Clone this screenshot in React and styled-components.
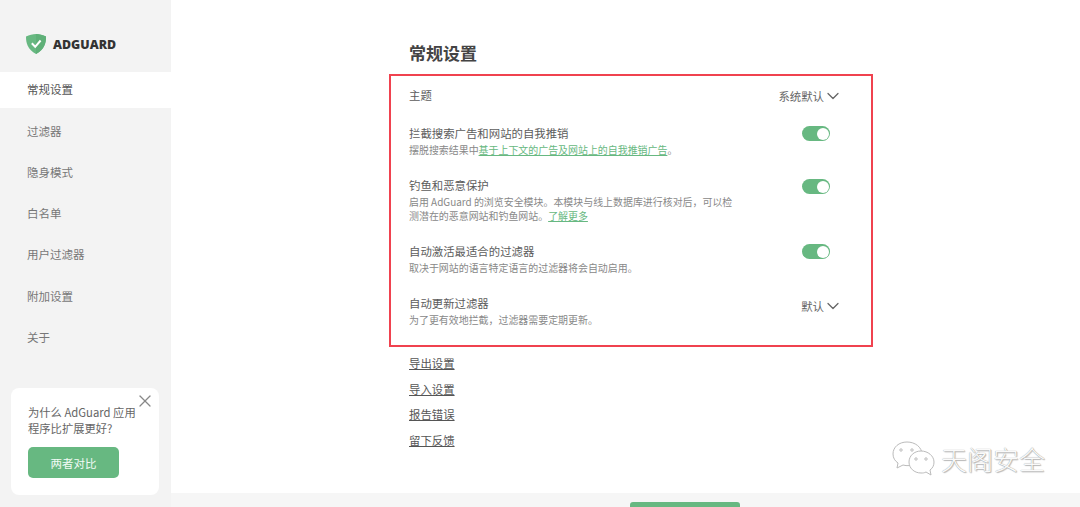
import styled, { createGlobalStyle } from 'styled-components';
import { ChevronDown, X } from 'lucide-react';

const GlobalStyle = createGlobalStyle`
  html, body {
    margin: 0;
    padding: 0;
    background: #fff;
  }

  body {
    font-family: "Noto Sans CJK SC", "Noto Sans", sans-serif;
    color: #555;
  }
`;

const Page = styled.div`
  position: relative;
  display: flex;
  width: 1080px;
  height: 507px;
  overflow: hidden;
`;

const Sidebar = styled.aside`
  display: flex;
  flex-direction: column;
  flex: 0 0 171px;
  background: #f3f3f3;
`;

const Logo = styled.div`
  display: flex;
  align-items: center;
  gap: 7px;
  height: 72px;
  padding: 16px 0 0 26px;
  box-sizing: border-box;
`;

const LogoText = styled.span`
  font-family: "Open Sans", "Liberation Sans", sans-serif;
  font-size: 12.4px;
  font-weight: 800;
  color: #333;
`;

const Nav = styled.nav`
  display: flex;
  flex-direction: column;
  gap: 5.3px;
`;

const NavItem = styled.div`
  display: flex;
  align-items: center;
  box-sizing: border-box;
  height: 36px;
  padding: 0 0 1.5px 27px;
  font-size: 11.5px;
  color: ${(p) => (p.$active ? '#555' : '#777')};
  background: ${(p) => (p.$active ? '#fff' : 'transparent')};
`;

const Promo = styled.div`
  position: relative;
  margin: auto 12px 12px 11px;
  padding: 16px 17px 17px;
  background: #fff;
  border-radius: 8px;
`;

const PromoText = styled.p`
  margin: 0 0 11px;
  font-size: 11.3px;
  line-height: 16px;
  color: #666;
`;

const PromoButton = styled.div`
  display: flex;
  align-items: center;
  justify-content: center;
  width: 91px;
  height: 31px;
  border-radius: 5px;
  background: #67b881;
  color: #f2fbf5;
  font-size: 11.5px;
`;

const Close = styled.span`
  position: absolute;
  top: 3px;
  right: 4px;
  display: flex;
  color: #888;
`;

const Main = styled.main`
  display: flex;
  flex-direction: column;
  flex: 1;
  min-width: 0;
`;

const Content = styled.div`
  flex: 1;
  padding: 41px 0 0 218px;
`;

const Title = styled.h1`
  margin: 0 0 9px 20px;
  font-size: 17px;
  line-height: 24px;
  font-weight: 700;
  color: #444;
`;

const SettingsBox = styled.section`
  display: flex;
  flex-direction: column;
  gap: 20px;
  box-sizing: border-box;
  width: 484px;
  height: 273px;
  padding: 11px 41px 0 18px;
  border: 2px solid #f0424f;
`;

const Row = styled.div`
  display: flex;
  justify-content: space-between;
  align-items: flex-start;
`;

const RowText = styled.div`
  width: 330px;
`;

const RowTitle = styled.div`
  font-size: 11.4px;
  line-height: 16px;
  color: #5c5c5c;
`;

const RowDesc = styled.div`
  margin-top: 2px;
  font-size: 9.95px;
  line-height: 14px;
  color: #888;
`;

const GreenLink = styled.span`
  color: #67b881;
  text-decoration: underline;
`;

const Select = styled.div`
  display: flex;
  align-items: center;
  margin: ${(p) => p.$top || 0}px -12px 0 0;
  font-size: 11.4px;
  line-height: 18px;
  color: #666;

  svg {
    margin: -1px;
    color: #666;
  }
`;

const Toggle = styled.div`
  display: flex;
  justify-content: flex-end;
  align-items: center;
  box-sizing: border-box;
  width: 28px;
  height: 15px;
  margin-top: ${(p) => p.$top || 1}px;
  padding-right: 1.5px;
  border-radius: 8px;
  background: #67b881;

  &::after {
    content: '';
    width: 12px;
    height: 12px;
    border-radius: 50%;
    background: #fff;
  }
`;

const Links = styled.div`
  display: flex;
  flex-direction: column;
  align-items: flex-start;
  gap: 7.6px;
  margin: 7px 0 0 20px;
`;

const PlainLink = styled.span`
  font-size: 11.4px;
  line-height: 18px;
  color: #555;
  text-decoration: underline;
`;

const Footer = styled.footer`
  flex: 0 0 14px;
  padding-left: 459px;
  overflow: hidden;
  background: #f6f6f6;
`;

const SaveButton = styled.div`
  width: 110px;
  height: 30px;
  margin-top: 9px;
  border-radius: 3px;
  background: #67b881;
`;

const Watermark = styled.div`
  position: absolute;
  left: 892px;
  top: 441px;
  display: flex;
  align-items: center;
  gap: 6px;
`;

const WatermarkText = styled.span`
  font-size: 26px;
  line-height: 36px;
  font-weight: 300;
  color: #fafafa;
  text-shadow: 0 0 1px #888, 1px 1px 1px #bbb;
`;

const NAV = ['常规设置', '过滤器', '隐身模式', '白名单', '用户过滤器', '附加设置', '关于'];
const LINKS = ['导出设置', '导入设置', '报告错误', '留下反馈'];

function Shield() {
  return (
    <svg width="20" height="20" viewBox="0 0 20 20">
      <path d="M10 0C6.8 0 3.2 1 0 2.6c0 6.6 1.6 13 10 17.4 8.4-4.4 10-10.8 10-17.4C16.8 1 13.2 0 10 0z" fill="#67b881" />
      <path d="M10 0v20c8.400-4.400 10-10.800 10-17.400C16.800 1 13.200 0 10 0z" fill="#5fb078" />
      <path d="M5.800 9.300l3.400 3.500 5.400-6.300" fill="none" stroke="#fff" strokeWidth="2" />
    </svg>
  );
}

function WeChat() {
  return (
    <svg width="43" height="36" viewBox="0 0 43 36" fill="#fff" stroke="#bbb" strokeWidth="1">
      <path d="M15 1C7 1 1 6 1 13c0 4 2 7 5 9l-1 5 6-3c2 .6 4 .8 6 .6 5 0 12-5 13-11C30 6 23 1 15 1z" />
      <path d="M29 10c-7 0-12 5-12 11s5 11 12 11c2 0 3 0 5-1l5 3-1-5c3-2 4-5 4-8 0-6-6-11-13-11z" />
      <circle cx="9" cy="9" r="1.200" />
      <circle cx="20" cy="9" r="1.200" />
      <circle cx="24" cy="18" r="1.200" />
      <circle cx="34" cy="18" r="1.200" />
    </svg>
  );
}

export default function App() {
  return (
    <Page>
      <GlobalStyle />
      <Sidebar>
        <Logo>
          <Shield />
          <LogoText>ADGUARD</LogoText>
        </Logo>
        <Nav>
          {NAV.map((item, i) => (
            <NavItem key={item} $active={i === 0}>{item}</NavItem>
          ))}
        </Nav>
        <Promo>
          <Close><X size={20} strokeWidth={1.5} /></Close>
          <PromoText>为什么 AdGuard 应用<br />程序比扩展更好?</PromoText>
          <PromoButton>两者对比</PromoButton>
        </Promo>
      </Sidebar>
      <Main>
        <Content>
          <Title>常规设置</Title>
          <SettingsBox>
            <Row>
              <RowTitle>主题</RowTitle>
              <Select>系统默认<ChevronDown size={20} strokeWidth={1.5} /></Select>
            </Row>
            <Row>
              <RowText>
                <RowTitle>拦截搜索广告和网站的自我推销</RowTitle>
                <RowDesc>摆脱搜索结果中<GreenLink>基于上下文的广告及网站上的自我推销广告</GreenLink>。</RowDesc>
              </RowText>
              <Toggle />
            </Row>
            <Row>
              <RowText>
                <RowTitle>钓鱼和恶意保护</RowTitle>
                <RowDesc>启用 AdGuard 的浏览安全模块。本模块与线上数据库进行核对后，可以检测潜在的恶意网站和钓鱼网站。<GreenLink>了解更多</GreenLink></RowDesc>
              </RowText>
              <Toggle $top={2} />
            </Row>
            <Row>
              <RowText>
                <RowTitle>自动激活最适合的过滤器</RowTitle>
                <RowDesc>取决于网站的语言特定语言的过滤器将会自动启用。</RowDesc>
              </RowText>
              <Toggle />
            </Row>
            <Row>
              <RowText>
                <RowTitle>自动更新过滤器</RowTitle>
                <RowDesc>为了更有效地拦截，过滤器需要定期更新。</RowDesc>
              </RowText>
              <Select $top={2}>默认<ChevronDown size={20} strokeWidth={1.5} /></Select>
            </Row>
          </SettingsBox>
          <Links>
            {LINKS.map((link) => (
              <PlainLink key={link}>{link}</PlainLink>
            ))}
          </Links>
        </Content>
        <Footer>
          <SaveButton />
        </Footer>
      </Main>
      <Watermark>
        <WeChat />
        <WatermarkText>天阁安全</WatermarkText>
      </Watermark>
    </Page>
  );
}
